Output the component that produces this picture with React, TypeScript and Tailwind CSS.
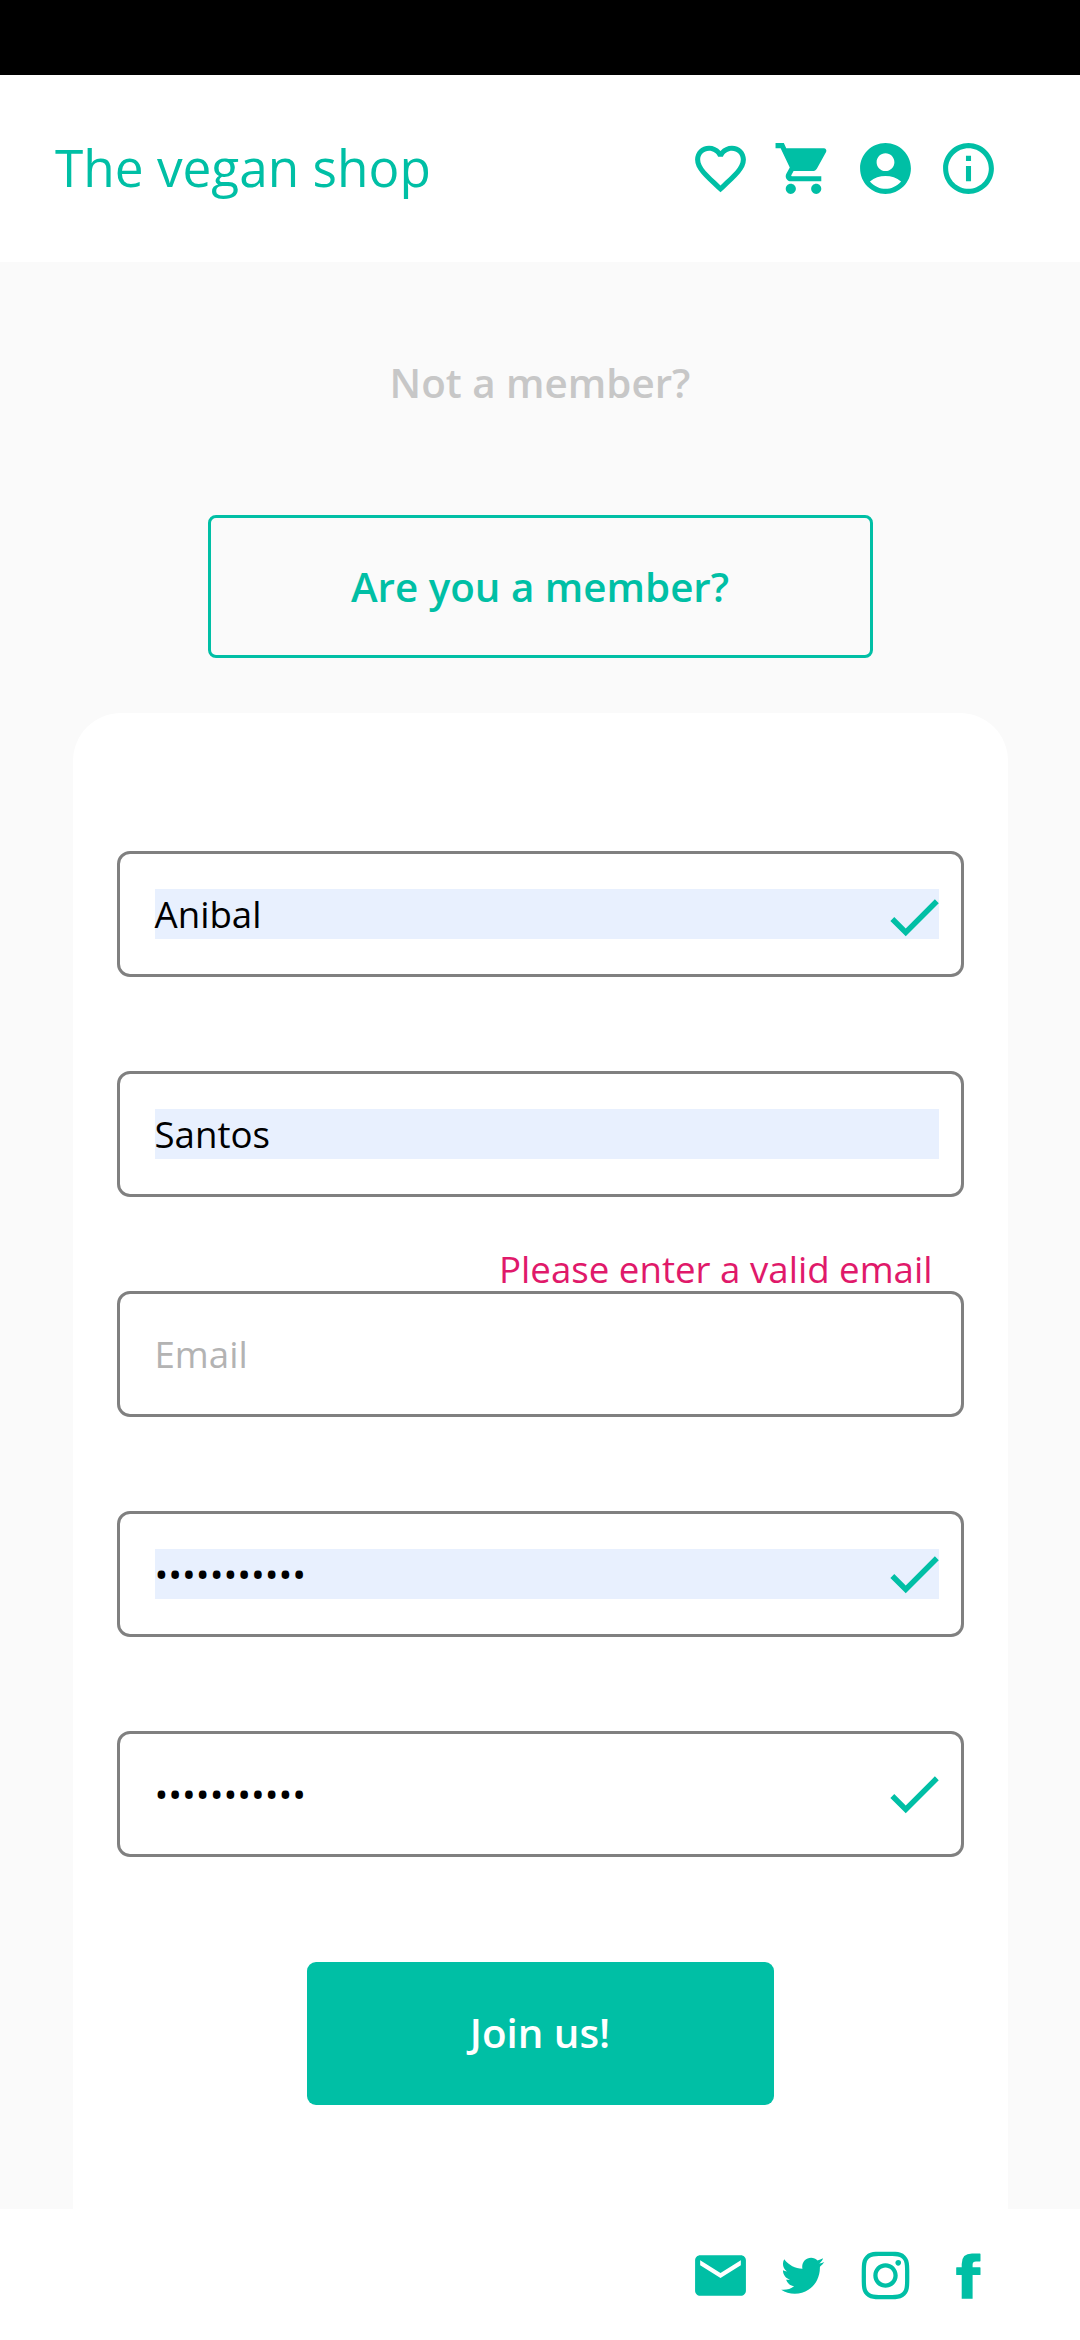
import type { ReactNode } from "react";
import { AiOutlineInstagram } from "react-icons/ai";
import {
  MdAccountCircle,
  MdCheck,
  MdEmail,
  MdFavoriteBorder,
  MdInfoOutline,
  MdShoppingCart,
} from "react-icons/md";
import { TiSocialTwitter } from "react-icons/ti";

function FacebookIcon() {
  return (
    <svg viewBox="0 0 61 61" className="size-[61px]" fill="currentColor" aria-label="Facebook">
      <path d="M42.5 9.2V15.8Q42.5 16.4 41.9 16.4H38Q34.6 16.4 34.6 19.4V22.2H41.9Q42.5 22.2 42.5 22.8V29.4Q42.5 30 41.9 30H34.6V53.7H23.7V30H18.8Q18.2 30 18.2 29.4V22.8Q18.2 22.2 18.8 22.2H23.7V19Q23.7 8.6 34 8.6H41.9Q42.5 8.6 42.5 9.2Z" />
    </svg>
  );
}

function IconRow({ children }: { children: ReactNode }) {
  return <div className="flex items-center gap-[21.5px] text-[#00bfa5]">{children}</div>;
}

type FieldProps = {
  value?: string;
  placeholder?: string;
  filled?: boolean;
  error?: string;
  children?: ReactNode;
};

function Field({ value, placeholder, filled, error, children }: FieldProps) {
  return (
    <div className="relative flex h-[126px] items-center rounded-[13px] border-[3px] border-[#808080] pr-[22px] pl-[35px]">
      {error && (
        <p className="absolute right-[28px] bottom-full mb-1 text-[36.67px] leading-[42px] whitespace-nowrap text-[#e0196a]">
          {error}
        </p>
      )}
      <div
        className={
          filled
            ? "h-[50px] flex-1 bg-[#e8f0fe] text-[36.67px] leading-[50px] text-black"
            : "h-[50px] flex-1 text-[36.67px] leading-[50px] text-black"
        }
      >
        {value ?? <span className="text-[#b3b3b3]">{placeholder}</span>}
      </div>
      {children}
    </div>
  );
}

export default function App() {
  return (
    <div className="flex h-[2340px] w-[1080px] flex-col overflow-hidden bg-[#fafafa] font-['Open_Sans',sans-serif]">
      <div className="h-[75px] shrink-0 bg-black" />
      <header className="flex h-[187px] shrink-0 items-center justify-between bg-white pr-[81.5px] pl-[55px]">
        <h1 className="pb-[3px] text-[51.33px] leading-[70px] whitespace-nowrap text-[#00bfa5]">The vegan shop</h1>
        <IconRow>
          <MdFavoriteBorder className="size-[61px]" />
          <MdShoppingCart className="size-[61px]" />
          <MdAccountCircle className="size-[61px]" />
          <MdInfoOutline className="size-[61px]" />
        </IconRow>
      </header>

      <main className="flex min-h-0 flex-1 flex-col items-center overflow-hidden pt-[49px]">
        <button className="h-[143px] w-[665px] shrink-0 pt-[2px] text-[40.33px] font-semibold text-[#c7c7c7]">
          Not a member?
        </button>
        <button className="mt-[61px] h-[143px] w-[665px] shrink-0 rounded-[8px] border-[3px] border-[#00bfa5] pt-[2px] text-[40.33px] font-semibold text-[#00bfa5]">
          Are you a member?
        </button>
        <section className="mt-[55px] flex min-h-0 w-[935px] flex-1 flex-col rounded-t-[48px] bg-white px-[44px] pt-[138px]">
          <div className="flex flex-col gap-[94px]">
            <Field value="Anibal" filled>
              <MdCheck className="absolute top-[30px] right-[14px] size-[66px] text-[#00bfa5]" />
            </Field>
            <Field value="Santos" filled />
            <Field placeholder="Email" error="Please enter a valid email" />
            <Field value="•••••••••••" filled>
              <MdCheck className="absolute top-[27px] right-[14px] size-[66px] text-[#00bfa5]" />
            </Field>
            <Field value="•••••••••••">
              <MdCheck className="absolute top-[27px] right-[14px] size-[66px] text-[#00bfa5]" />
            </Field>
          </div>
          <button className="mt-[105px] h-[143px] w-[467px] shrink-0 self-center rounded-[9px] bg-[#00bfa5] text-[40.33px] font-semibold text-white">
            Join us!
          </button>
        </section>
      </main>

      <footer className="flex h-[131px] shrink-0 items-center justify-end bg-white pt-[2px] pr-[81.5px]">
        <IconRow>
          <MdEmail className="size-[61px]" />
          <TiSocialTwitter preserveAspectRatio="none" className="mx-[1.75px] h-[59.5px] w-[57.5px]" />
          <AiOutlineInstagram className="size-[61px]" />
          <FacebookIcon />
        </IconRow>
      </footer>
    </div>
  );
}
